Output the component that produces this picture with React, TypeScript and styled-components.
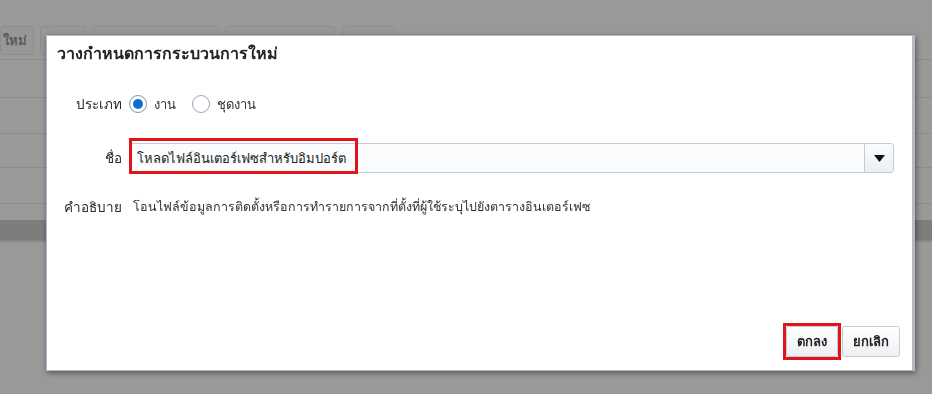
import { FC } from 'react';
import styled, { createGlobalStyle } from 'styled-components';

const GlobalStyle = createGlobalStyle`
  html, body {
    margin: 0;
    padding: 0;
    width: 932px;
    height: 394px;
    overflow: hidden;
    background: #ffffff;
    font-family: "Noto Sans", "DejaVu Sans", sans-serif;
    color: #333333;
  }
`;

const toolbarButtons = [
  { label: 'ใหม่', width: 34 },
  { label: '', width: 46 },
  { label: '', width: 127 },
  { label: '', width: 111 },
  { label: '', width: 53 },
];

const App: FC = () => {
  return (
    <>
      <GlobalStyle />
      <Page>
        <Toolbar>
          {toolbarButtons.map((b, i) => (
            <ToolButton key={i} style={{ width: b.width }}>
              {b.label}
            </ToolButton>
          ))}
        </Toolbar>
        <TableRow $height={38} />
        <TableRow $height={36} />
        <TableRow $height={34} />
        <TableRow $height={36} />
        <Spacer />
        <DarkBand />
      </Page>

      <Overlay>
        <Dialog>
          <Title>วางกำหนดการกระบวนการใหม่</Title>
          <Form>
            <Row $height={40}>
              <Label>ประเภท</Label>
              <Radios>
                <RadioItem>
                  <Radio $checked />
                  <span>งาน</span>
                </RadioItem>
                <RadioItem>
                  <Radio />
                  <span>ชุดงาน</span>
                </RadioItem>
              </Radios>
            </Row>
            <Row $height={30}>
              <Label>ชื่อ</Label>
              <Field>
                <Input>โหลดไฟล์อินเตอร์เฟซสำหรับอิมปอร์ต</Input>
                <DropButton>
                  <svg width="11" height="7" viewBox="0 0 11 7">
                    <path d="M0 0 L11 0 L5.5 7 Z" fill="#111" />
                  </svg>
                </DropButton>
                <Highlight />
              </Field>
            </Row>
            <Row $height={30}>
              <Label>คำอธิบาย</Label>
              <Value>โอนไฟล์ข้อมูลการติดตั้งหรือการทำรายการจากที่ตั้งที่ผู้ใช้ระบุไปยังตารางอินเตอร์เฟซ</Value>
            </Row>
          </Form>
          <Footer>
            <Marked>
              <Button>ตกลง</Button>
            </Marked>
            <Button>ยกเลิก</Button>
          </Footer>
        </Dialog>
      </Overlay>
    </>
  );
};

export default App;

const Page = styled.div`
  display: flex;
  flex-direction: column;
  width: 932px;
  height: 394px;
  background: #ffffff;
`;

const Toolbar = styled.div`
  display: flex;
  gap: 6px;
  padding-top: 26px;
  height: 29px;
  border-bottom: 4px solid #ffffff;
`;

const ToolButton = styled.div`
  box-sizing: border-box;
  height: 29px;
  border: 1px solid #ececec;
  border-radius: 3px;
  background: #fcfcfc;
  font-size: 13px;
  font-weight: bold;
  color: #9a9a9a;
  line-height: 27px;
  text-align: right;
  padding-right: 6px;
  white-space: nowrap;
`;

const TableRow = styled.div<{ $height: number }>`
  height: ${(p) => p.$height - 1}px;
  border-top: 1px solid #eaeaea;
`;

const Spacer = styled.div`
  height: 16px;
  border-top: 1px solid #eaeaea;
`;

const DarkBand = styled.div`
  height: 20px;
  background: #d0d0d0;
  border-bottom: 2px solid #e2e2e2;
`;

const Overlay = styled.div`
  position: fixed;
  inset: 0;
  background: rgba(0, 0, 0, 0.4);
`;

const Dialog = styled.div`
  position: absolute;
  left: 46px;
  top: 35px;
  box-sizing: border-box;
  width: 869px;
  height: 336px;
  display: flex;
  flex-direction: column;
  background: #ffffff;
  border: 1px solid #a9bccf;
  border-right: 3px solid #b3bac2;
  box-shadow: 1px 2px 6px rgba(0, 0, 0, 0.45);
`;

const Title = styled.div`
  padding: 7px 10px 8px;
  font-size: 16px;
  font-weight: bold;
  line-height: 20px;
  color: #222222;
`;

const Form = styled.div`
  display: flex;
  flex-direction: column;
  gap: 19px;
  margin-top: 13px;
`;

const Row = styled.div<{ $height: number }>`
  display: grid;
  grid-template-columns: 75px 1fr;
  column-gap: 7px;
  align-items: center;
  height: ${(p) => p.$height}px;
  padding-right: 18px;
`;

const Label = styled.div`
  text-align: right;
  font-size: 13.5px;
  color: #2a2a2a;
  white-space: nowrap;
`;

const Radios = styled.div`
  display: flex;
  align-items: center;
  gap: 16px;
`;

const RadioItem = styled.label`
  display: flex;
  align-items: center;
  gap: 7px;
  font-size: 13px;
  color: #333333;
`;

const Radio = styled.span<{ $checked?: boolean }>`
  box-sizing: border-box;
  width: 18px;
  height: 18px;
  border-radius: 50%;
  border: 1px solid ${(p) => (p.$checked ? '#7d96ad' : '#97a6b4')};
  background: #ffffff;
  display: grid;
  place-items: center;

  &::after {
    content: '';
    display: ${(p) => (p.$checked ? 'block' : 'none')};
    width: 10px;
    height: 10px;
    border-radius: 50%;
    background: #0f6fd0;
  }
`;

const Field = styled.div`
  position: relative;
  display: flex;
  height: 30px;
`;

const Input = styled.div`
  flex: 1;
  box-sizing: border-box;
  height: 30px;
  border: 1px solid #c3ccd5;
  border-right: none;
  background: #fbfcfd;
  padding-left: 7px;
  font-size: 13px;
  line-height: 28px;
  color: #222222;
`;

const DropButton = styled.div`
  box-sizing: border-box;
  width: 30px;
  height: 30px;
  border: 1px solid #c3ccd5;
  border-radius: 0 3px 3px 0;
  background: linear-gradient(#fafbfc, #eceff2);
  display: grid;
  place-items: center;
`;

const Highlight = styled.div`
  position: absolute;
  left: 0;
  top: -5px;
  width: 229px;
  height: 36px;
  box-sizing: border-box;
  border: 3px solid #e0141b;
  pointer-events: none;
`;

const Value = styled.div`
  padding-left: 4px;
  font-size: 12.5px;
  color: #333333;
  white-space: nowrap;
`;

const Footer = styled.div`
  margin-top: auto;
  display: flex;
  justify-content: flex-end;
  align-items: center;
  gap: 1px;
  padding: 0 12px 10px 0;
`;

const Marked = styled.div`
  border: 3px solid #e0141b;
  padding: 0;
`;

const Button = styled.div`
  box-sizing: border-box;
  height: 31px;
  padding: 0 10px;
  border: 1px solid #c4ccd4;
  border-radius: 3px;
  background: linear-gradient(#ffffff, #edf0f3);
  font-size: 13px;
  font-weight: bold;
  line-height: 29px;
  color: #222222;
`;
